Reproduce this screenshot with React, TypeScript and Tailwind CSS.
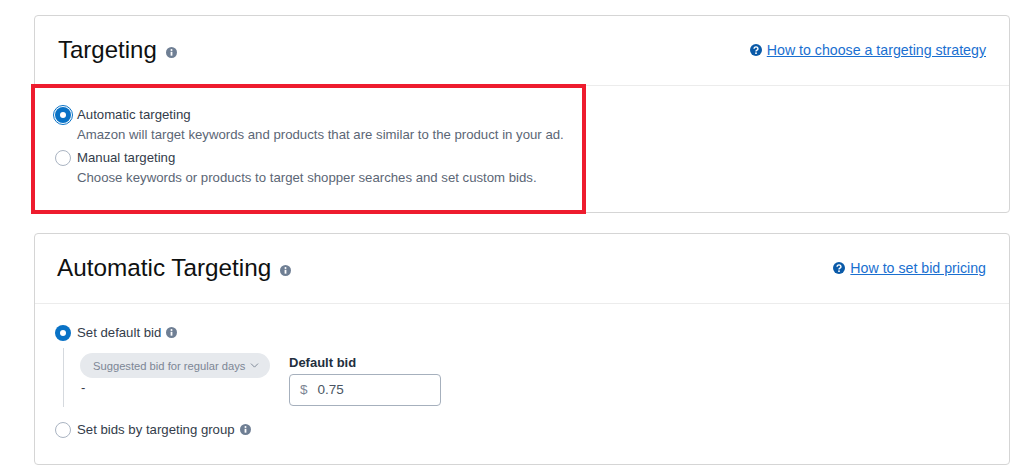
import { ChevronDown } from "lucide-react";

function InfoIcon({ className }: { className: string }) {
  return (
    <svg viewBox="0 0 16 16" className={className} aria-hidden="true">
      <circle cx="8" cy="8" r="8" fill="#6f7f94" />
      <rect x="6.7" y="7" width="2.6" height="5.6" fill="#fff" />
      <circle cx="8" cy="4.4" r="1.5" fill="#fff" />
    </svg>
  );
}

function HelpLink({ label }: { label: string }) {
  return (
    <div className="flex items-center gap-[5px]">
      <svg viewBox="0 0 16 16" className="h-[12px] w-[12px]" aria-hidden="true">
        <circle cx="8" cy="8" r="8" fill="#0a5aa8" />
        <path d="M5.4 6.2a2.6 2.4 0 1 1 3.9 2.1c-.9.5-1.3.9-1.3 1.7" fill="none" stroke="#fff" strokeWidth="1.9" />
        <rect x="6.9" y="11.2" width="2.2" height="2.1" fill="#fff" />
      </svg>
      <a href="#" className="text-[14.2px] text-[#1a6fd0] underline">
        {label}
      </a>
    </div>
  );
}

function Radio({ checked, focused }: { checked?: boolean; focused?: boolean }) {
  if (checked) {
    return (
      <span
        className={`flex h-[16px] w-[16px] shrink-0 items-center justify-center rounded-full bg-[#0972c6] ${
          focused ? "outline outline-[1.5px] outline-offset-[1.5px] outline-[#0972c6]" : ""
        }`}
      >
        <span className="h-[6px] w-[6px] rounded-full bg-white" />
      </span>
    );
  }
  return <span className="block h-[16px] w-[16px] shrink-0 rounded-full border border-[#aab4c2] bg-white" />;
}

export default function App() {
  return (
    <div className="relative h-[475px] w-[1024px] overflow-hidden bg-white pl-[34px] pt-[15px] font-['Liberation_Sans',Arial,sans-serif]">
      {/* Targeting card */}
      <section className="h-[198px] w-[976px] rounded-[4px] border border-[#d5d5d5]">
        <header className="flex h-[70px] items-center justify-between border-b border-[#ececec] px-[23px]">
          <div className="-mt-[2px] flex items-center gap-[9px]">
            <h2 className="text-[24px] leading-[30px] text-[#0f1111]">Targeting</h2>
            <InfoIcon className="mt-[6px] h-[11px] w-[11px]" />
          </div>
          <HelpLink label="How to choose a targeting strategy" />
        </header>
        <div className="pl-[20px] pt-[19px] text-[13.2px] leading-[20px]">
          <div className="flex items-start gap-[6px]">
            <span className="mt-[2px] block">
              <Radio checked focused />
            </span>
            <div>
              <div className="text-[#333c4a]">Automatic targeting</div>
              <div className="text-[#5b6675]">Amazon will target keywords and products that are similar to the product in your ad.</div>
            </div>
          </div>
          <div className="mt-[3px] flex items-start gap-[6px]">
            <span className="mt-[2px] block">
              <Radio />
            </span>
            <div>
              <div className="text-[#333c4a]">Manual targeting</div>
              <div className="text-[#5b6675]">Choose keywords or products to target shopper searches and set custom bids.</div>
            </div>
          </div>
        </div>
      </section>

      {/* Automatic Targeting card */}
      <section className="mt-[20px] h-[232px] w-[976px] rounded-[4px] border border-[#d5d5d5]">
        <header className="flex h-[70px] items-center justify-between border-b border-[#ececec] pl-[22px] pr-[23px]">
          <div className="-mt-[2px] flex items-center gap-[9px]">
            <h2 className="text-[24.3px] leading-[30px] text-[#0f1111]">Automatic Targeting</h2>
            <InfoIcon className="mt-[6px] h-[11px] w-[11px]" />
          </div>
          <HelpLink label="How to set bid pricing" />
        </header>
        <div className="pl-[20px] pt-[20px] text-[13.2px] leading-[18px] text-[#333c4a]">
          <div className="flex items-center gap-[6px]">
            <Radio checked />
            <span>Set default bid</span>
            <InfoIcon className="-ml-[1px] mb-[1px] h-[11px] w-[11px]" />
          </div>
          <div className="ml-[8px] mt-[6px] flex h-[59px] border-l border-[#d5d9de] pl-[16px] pt-[5px]">
            <div className="w-[190px]">
              <div className="flex h-[25px] w-[190px] items-center justify-between whitespace-nowrap rounded-full bg-[#e6e9ed] pl-[13px] pr-[9px] text-[11.2px] text-[#7c8695]">
                <span>Suggested bid for regular days</span>
                <ChevronDown className="h-[13px] w-[13px] shrink-0" strokeWidth={1.75} />
              </div>
              <div className="mt-[1px] pl-[1px] text-[13px] leading-[18px] text-[#333c4a]">-</div>
            </div>
            <div className="ml-[19px] pt-[1px]">
              <div className="text-[13px] font-bold leading-[18px] text-[#232f3e]">Default bid</div>
              <div className="mt-[2px] flex h-[32px] w-[152px] items-center rounded-[4px] border border-[#a6b0bd] pl-[10px] text-[13.5px]">
                <span className="text-[#7c8695]">$</span>
                <span className="ml-[10px] text-[#4a5563]">0.75</span>
              </div>
            </div>
          </div>
          <div className="mt-[14px] flex items-center gap-[6px]">
            <Radio />
            <span>Set bids by targeting group</span>
            <InfoIcon className="-ml-[1px] mb-[1px] h-[11px] w-[11px]" />
          </div>
        </div>
      </section>

      {/* Red annotation box */}
      <div className="pointer-events-none absolute left-[31px] top-[84px] h-[130px] w-[555px] border-[4px] border-[#ee1c2e]" />
    </div>
  );
}
